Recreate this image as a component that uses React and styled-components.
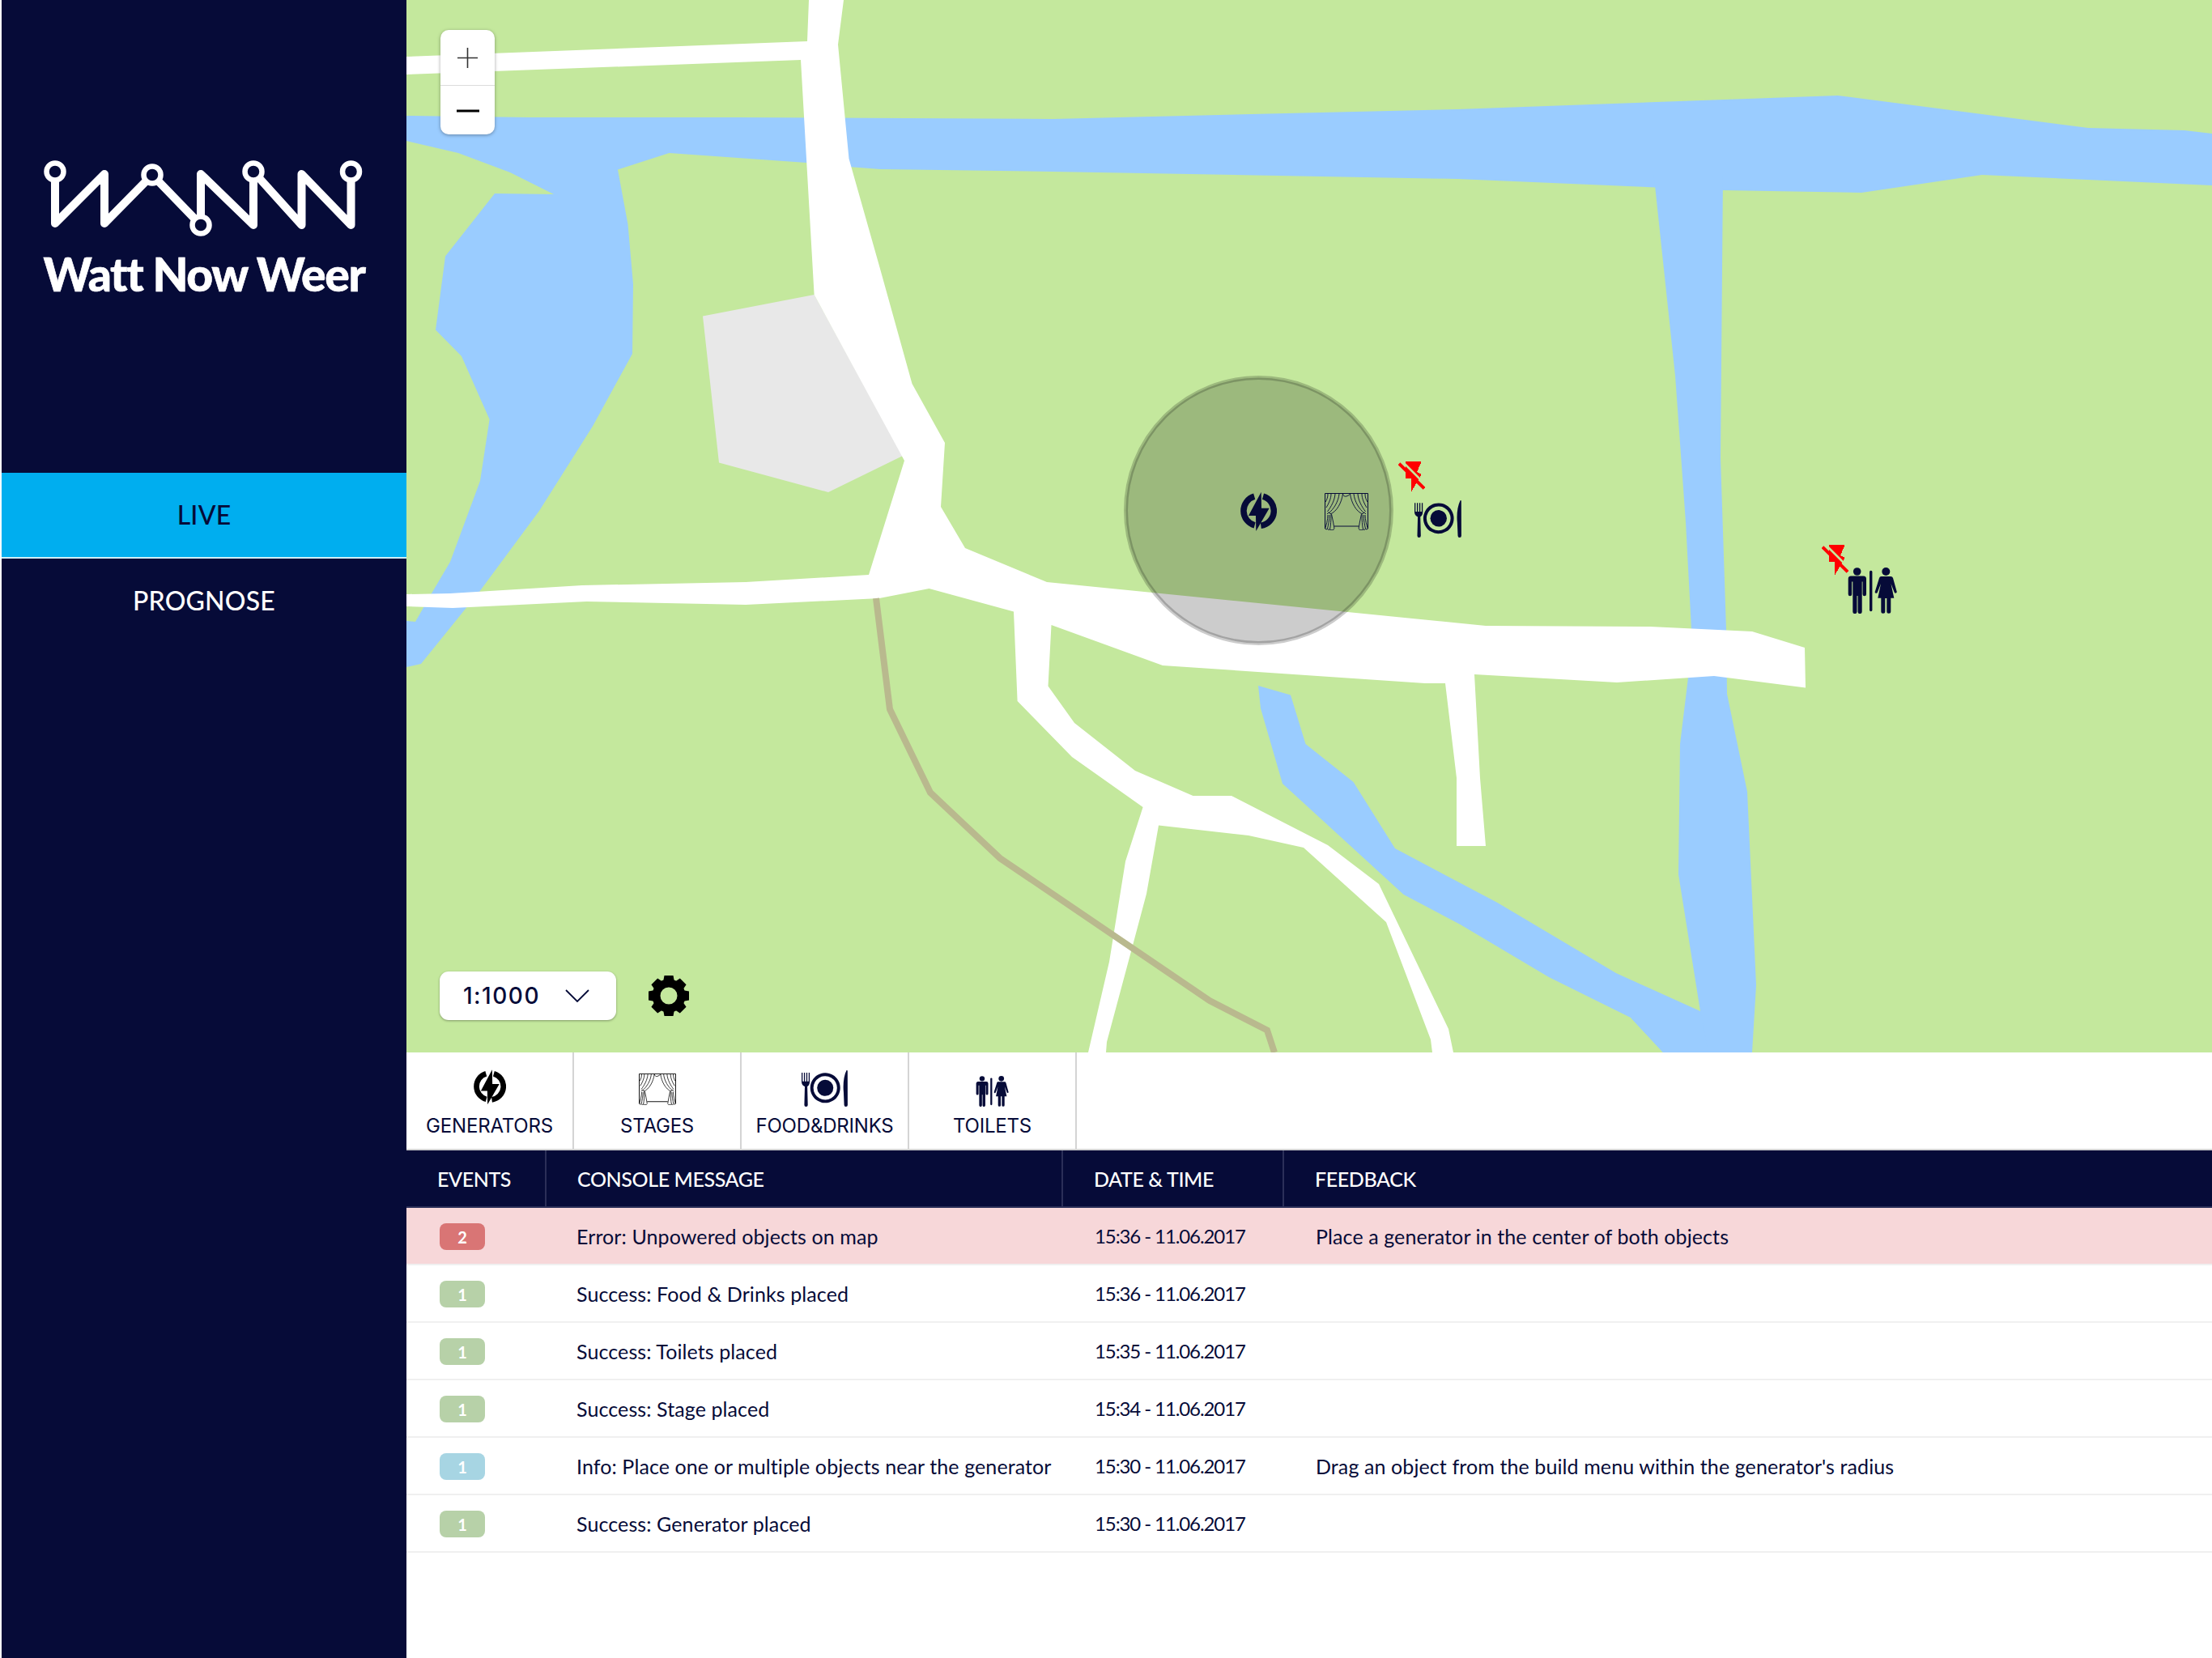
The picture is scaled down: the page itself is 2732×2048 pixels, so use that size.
import React from "react";
import styled, { createGlobalStyle } from "styled-components";

const NAVY = "#060b38";
const GREEN = "#c4e89d";
const BLUE = "#9accff";

const GlobalStyle = createGlobalStyle`
  html, body {
    margin: 0;
    padding: 0;
    background: #fff;
    font-family: "Lato", "Liberation Sans", sans-serif;
  }
`;

const Page = styled.div`
  display: flex;
  width: 2732px;
  height: 2048px;
  padding-left: 2px;
  box-sizing: border-box;
  overflow: hidden;
`;

const Sidebar = styled.aside`
  flex: 0 0 500px;
  background: ${NAVY};
  display: flex;
  flex-direction: column;
`;

const LogoBlock = styled.div`
  height: 584px;
  padding-top: 196px;
  box-sizing: border-box;
  display: flex;
  flex-direction: column;
  align-items: center;
`;

const LogoMark = styled.svg`
  display: block;
  width: 398px;
  height: 96px;
  margin-left: -2px;
`;

const LogoText = styled.div`
  margin-top: 9px;
  color: #fff;
  font-family: "Lato", sans-serif;
  font-weight: 900;
  font-size: 57px;
  letter-spacing: -1.4px;
  line-height: 74px;
  white-space: nowrap;
  -webkit-text-stroke: 0.6px #fff;
`;

const NavItem = styled.div`
  height: 106px;
  padding-bottom: 2px;
  box-sizing: border-box;
  display: flex;
  align-items: center;
  justify-content: center;
  font-size: 32px;
  font-weight: 500;
  letter-spacing: 0.2px;
  color: ${(p) => (p.$active ? NAVY : "#fff")};
  background: ${(p) => (p.$active ? "#00aeef" : "transparent")};
  border-bottom: 2px solid ${(p) => (p.$active ? "#cfeefb" : "transparent")};
`;

const Main = styled.main`
  flex: 1;
  min-width: 0;
  display: flex;
  flex-direction: column;
`;

const MapArea = styled.section`
  position: relative;
  height: 1300px;
  background: ${GREEN};
  overflow: hidden;
`;

const MapDrawing = styled.svg`
  display: block;
  width: 2230px;
  height: 1300px;
`;

const Pin = styled.div`
  position: absolute;
  left: ${(p) => p.$x - 502}px;
  top: ${(p) => p.$y}px;
  width: ${(p) => p.$w}px;
  height: ${(p) => p.$h}px;
  color: ${NAVY};
  svg {
    display: block;
    width: 100%;
    height: 100%;
  }
`;

const ZoomControl = styled.div`
  position: absolute;
  left: 42px;
  top: 37px;
  width: 67px;
  height: 129px;
  background: #fff;
  border-radius: 10px;
  box-shadow: 0 1px 4px rgba(0, 0, 0, 0.35);
  display: flex;
  flex-direction: column;
`;

const ZoomButton = styled.div`
  flex: 0 0 ${(p) => p.$h}px;
  display: flex;
  align-items: center;
  justify-content: center;
  & + & {
    border-top: 1px solid #dcdcdc;
  }
`;

const ScaleRow = styled.div`
  position: absolute;
  left: 41px;
  top: 1200px;
  display: flex;
  align-items: center;
  gap: 40px;
`;

const ScaleSelect = styled.div`
  width: 218px;
  height: 60px;
  box-sizing: border-box;
  padding: 0 33px 0 29px;
  background: #fff;
  border-radius: 11px;
  box-shadow: 0 1px 3px rgba(0, 0, 0, 0.35);
  display: flex;
  align-items: center;
  justify-content: space-between;
  color: ${NAVY};
  font-family: "Inter", sans-serif;
  font-weight: 500;
  font-size: 28px;
  letter-spacing: 1.5px;
`;

const Tabs = styled.nav`
  display: flex;
  height: 119px;
  border-bottom: 2px solid #d4d4d4;
`;

const Tab = styled.div`
  width: 205px;
  border-right: 2px solid #d4d4d4;
  display: flex;
  flex-direction: column;
  align-items: center;
  color: ${NAVY};
  font-family: "Inter", sans-serif;
  font-size: 24px;
  letter-spacing: -0.2px;
`;

const TabIcon = styled.div`
  height: 68px;
  display: flex;
  align-items: flex-end;
  color: ${(p) => (p.$black ? "#000" : NAVY)};
  svg {
    display: block;
    width: ${(p) => p.$w}px;
    height: ${(p) => p.$h}px;
    margin-bottom: ${(p) => p.$mb}px;
  }
`;

const TabLabel = styled.div`
  margin-top: 11px;
  line-height: 24px;
`;

const HeaderRow = styled.div`
  display: grid;
  grid-template-columns: 171px 638px 273px 1fr;
  height: 69px;
  background: ${NAVY};
  border-bottom: 2px solid #2b2f58;
`;

const HeaderCell = styled.div`
  display: flex;
  align-items: center;
  padding-left: 38px;
  color: #fff;
  font-size: 25px;
  font-weight: 500;
  letter-spacing: -0.4px;
  & + & {
    border-left: 2px solid #2b2f58;
  }
`;

const Row = styled.div`
  display: grid;
  grid-template-columns: 171px 638px 273px 1fr;
  height: 69px;
  background: ${(p) => (p.$error ? "#f7d7d9" : "#fff")};
  border-bottom: 2px solid #f0f0f0;
`;

const Cell = styled.div`
  display: flex;
  align-items: center;
  padding-left: ${(p) => p.$pad ?? 39}px;
  color: ${NAVY};
  font-size: 25px;
  letter-spacing: 0.1px;
  white-space: nowrap;
`;

const TimeCell = styled(Cell)`
  font-size: 24px;
  letter-spacing: -1.1px;
`;

const Badge = styled.span`
  width: 56px;
  height: 33px;
  margin-top: 2px;
  border-radius: 8px;
  display: flex;
  align-items: center;
  justify-content: center;
  background: ${(p) => p.$bg};
  color: #fff;
  font-size: 20px;
  font-weight: 700;
`;

const GeneratorIcon = () => (
  <svg viewBox="0 0 45 49" fill="none">
    <path d="M17.200 6.200A18.500 18.500 0 0 0 17.600 41.800" stroke="currentColor" strokeWidth="7.500" />
    <path d="M28 6.200A18.500 18.500 0 0 1 25.300 42.300" stroke="currentColor" strokeWidth="7.500" />
    <path d="M25.700 0.700L10 30h9l0.300 19L35.700 20.700H26z" fill="currentColor" stroke="none" />
  </svg>
);

const StageIcon = () => (
  <svg viewBox="0 0 54 46" fill="none" stroke="currentColor" strokeWidth="0.9">
    <path d="M0.500 0.500H53.500M0.500 0.500V44M53.500 0.500V44M12 41H42" strokeWidth="1.100" />
    <path d="M22.500 1q1 4 4.500 3t4.500-3" />
    {[0, 1].map((side) => (
      <g key={side} transform={side ? "matrix(-1 0 0 1 54 0)" : undefined}>
        <path d="M22.500 1C21 12 15 23 7 26" />
        <path d="M18 1C17 11 11 20 5 25" />
        <path d="M13 1C12.500 9 8 17 3.500 23" />
        <path d="M8 1C8 7 5 13 2 18" />
        <path d="M4 1C4 5 3 8 1 11" />
        <path d="M3 26L5 24L8 26" />
        <path d="M4 27C4 33 2 40 0.500 44q1.500 1.500 3 0.500q1.500 1.500 3 0.500q1.500 1.500 3 0.500q1.500 0 2.500-1" />
        <path d="M6 27C6 33 4.500 40 3.500 44M8 27C8 33 7.500 40 6.500 45M8.500 26C10 32 11 38 12 44" />
      </g>
    ))}
  </svg>
);

const FoodIcon = () => (
  <svg viewBox="0 0 58.500 47" fill="currentColor">
    <path d="M0 3h1.300v11h1.700V3h1.300v11H6V3h1.300v11H9V3h1.300v11c0 4-1.500 5.500-3 6.500L7.900 44a2.200 2.200 0 0 1-4.400 0L4.100 20.500C2 19.500 0 18 0 14z" />
    <path fillRule="evenodd" d="M30 3.300a19 19 0 1 0 0.010 0zM30 7.300a15 15 0 1 1-0.010 0z" />
    <circle cx="30" cy="22.300" r="10.300" />
    <path d="M57 0C53.500 7 52.300 18 53.300 27.500L54 44a2.200 2.200 0 0 0 4.400 0L58.300 1C58.300 0 57.500-0.500 57 0z" />
  </svg>
);

const ToiletIcon = () => (
  <svg viewBox="0 0 61 57" fill="currentColor">
    <circle cx="11.700" cy="5" r="4.800" />
    <path d="M4 10.500h15.500a3.500 3.500 0 0 1 3.500 3.500v19a2.200 2.200 0 0 1-4.500 0V17.500h-0.800V54.500a2.600 2.600 0 0 1-5.200 0V35h-1v19.500a2.600 2.600 0 0 1-5.200 0V17.500H5.200V33a2.200 2.200 0 0 1-4.500 0V14a3.500 3.500 0 0 1 3.300-3.500z" />
    <rect x="27" y="3.700" width="3.400" height="50.500" rx="1.700" />
    <circle cx="47.300" cy="5" r="5" />
    <path d="M41.500 11h11.500c1.500 0 2.500 0.700 3 2l4.600 16.500a1.500 1.500 0 0 1-3 1L53.500 20l3.800 17.700H53.300v16.500a2.500 2.500 0 0 1-5 0V38h-2v16.200a2.500 2.500 0 0 1-5 0V37.700H37.300L41 20l-4.200 10.700a1.500 1.500 0 0 1-3-1L39 13c0.500-1.300 1.300-2 2.500-2z" />
  </svg>
);

const NoPowerIcon = () => (
  <svg viewBox="0 0 33 39" shapeRendering="crispEdges">
    <path d="M9.300 0H28.700L23 13l5.700 3L15.500 38.500 16 21H9.300z" fill="#ff0000" />
    <path d="M7 2L31 26" stroke={GREEN} strokeWidth="2.500" shapeRendering="auto" />
    <path d="M1 2.700L32 33.300" stroke="#ff0000" strokeWidth="3.800" shapeRendering="auto" />
  </svg>
);

const gearTeeth = [0, 45, 90, 135, 180, 225, 270, 315];

const GearIcon = () => (
  <svg width="50" height="50" viewBox="0 0 50 50">
    {gearTeeth.map((angle) => (
      <path key={angle} d="M19.500 0H30.500L32 8H18z" fill="#000" transform={`rotate(${angle} 25 25)`} />
    ))}
    <circle cx="25" cy="25" r="15.500" fill="none" stroke="#000" strokeWidth="10" />
  </svg>
);

const water = [
  "502,143 653,145 908,145 1300,147 1800,135 2270,118 2579,158 2698,161 2732,165 2732,229 2448,216 2299,238 2128,235 1800,221 1300,212 1087,209 1048,206 996,201 826.500,189 763,209.500 775.500,277 782,351 781,437 732,526.500 666,631 592,731 576.500,750 520,820 502,824 502,767 513,768 533,733 556,694 593,594 604.600,518 570,440 538,407.500 550,316.500 611,239 684,240 630,213 566,189 502,174",
  "2042.500,215 2128,215 2125,566 2132,778 2133,857 2158,978 2169,1217 2164,1300 2054,1300 2014,1257 2073,1300 2100,1249 2073,1080 2075,919 2085,837 2089,777 2082,645 2069,464",
  "1554,847 1594,858.500 1612.500,919 1671.600,966 1723,1048 1849.500,1115 1996,1202 2100,1249 2110,1300 2054,1300 2014,1257 1913,1207 1803.600,1142 1733.600,1105 1584,968 1557,875",
];

const roads = [
  "502,70 997,51 999,0 1042,0 1035,55 1048.500,196 1087,332 1126.500,474 1167,547 1162,626 1192,677 1293,719 1835,773 2038,774 2164,780 2229,800 2230,849.500 2117,835 1997,843 1821,833 1828,961 1835,1045 1799,1045 1799,961 1785,844 1760,844 1436,822 1298.500,772 1294.500,847.500 1327,893 1402,952 1473.500,983 1521,983 1640,1044 1703,1092 1789,1271 1795,1300 1769,1300 1767,1284 1712,1139 1610,1047 1542,1032 1431,1019.500 1416,1104 1396,1179 1367,1287 1366,1300 1344,1300 1370,1188 1390,1064 1411.600,997 1324,935 1256.600,866 1252,755.500 1147.500,727 1086,739 921,747 724.500,743 559,751 502,749 502,734 556,733 719,723 921,719 1073,710 1117,569 1005.600,364 989,74 502,92",
];

const plaza = "868,390.500 1005.600,364 1115,563 1023,608 888,571.500";
const footpath = "1082,739 1099,876 1149,979 1235,1060 1494,1236 1565,1272.500 1574,1300";

const logoLine = "M68 212V276L129 215V276L188 216L248 278V215L313 278V212L372.500 278V215L433.500 278V212";

const logoNodes = [
  [68, 212],
  [188, 216],
  [248, 278],
  [313, 212],
  [433.5, 212],
];

const events = [
  { count: 2, bg: "#d97575", message: "Error: Unpowered objects on map", time: "15:36 - 11.06.2017", feedback: "Place a generator in the center of both objects", error: true },
  { count: 1, bg: "#b7d1a8", message: "Success: Food & Drinks placed", time: "15:36 - 11.06.2017" },
  { count: 1, bg: "#b7d1a8", message: "Success: Toilets placed", time: "15:35 - 11.06.2017" },
  { count: 1, bg: "#b7d1a8", message: "Success: Stage placed", time: "15:34 - 11.06.2017" },
  { count: 1, bg: "#a7d5e3", message: "Info: Place one or multiple objects near the generator", time: "15:30 - 11.06.2017", feedback: "Drag an object from the build menu within the generator's radius" },
  { count: 1, bg: "#b7d1a8", message: "Success: Generator placed", time: "15:30 - 11.06.2017" },
];

const App = () => (
  <>
    <GlobalStyle />
    <Page>
      <Sidebar>
        <LogoBlock>
          <LogoMark viewBox="52 196 398 96" fill="none">
            <path d={logoLine} stroke="#fff" strokeWidth="10" strokeLinejoin="round" strokeLinecap="round" />
            {logoNodes.map(([cx, cy]) => (
              <circle key={cx} cx={cx} cy={cy} r="10.500" fill={NAVY} stroke="#fff" strokeWidth="6.500" />
            ))}
          </LogoMark>
          <LogoText>Watt Now Weer</LogoText>
        </LogoBlock>
        <NavItem $active>LIVE</NavItem>
        <NavItem>PROGNOSE</NavItem>
      </Sidebar>
      <Main>
        <MapArea>
          <MapDrawing viewBox="502 0 2230 1300">
            {water.map((points) => (
              <polygon key={points} points={points} fill={BLUE} />
            ))}
            <polygon points={plaza} fill="#e8e8e8" />
            {roads.map((points) => (
              <polygon key={points} points={points} fill="#fff" />
            ))}
            <polyline points={footpath} fill="none" stroke="#b9b98e" strokeWidth="8" />
            <circle cx="1554.500" cy="630.500" r="164" fill="rgba(0,0,0,0.2)" stroke="rgba(0,0,0,0.2)" strokeWidth="5" />
          </MapDrawing>
          <Pin $x={1532} $y={607} $w={45} $h={49}><GeneratorIcon /></Pin>
          <Pin $x={1636} $y={609} $w={54} $h={46}><StageIcon /></Pin>
          <Pin $x={1747} $y={618} $w={58} $h={47}><FoodIcon /></Pin>
          <Pin $x={1727} $y={570} $w={33} $h={39}><NoPowerIcon /></Pin>
          <Pin $x={2282} $y={701} $w={61} $h={57}><ToiletIcon /></Pin>
          <Pin $x={2250} $y={673} $w={33} $h={39}><NoPowerIcon /></Pin>
          <ZoomControl>
            <ZoomButton $h={68}>
              <svg width="25" height="25" viewBox="0 0 25 25">
                <path d="M12.500 0V25M0 12.500H25" stroke="#333" strokeWidth="1.600" />
              </svg>
            </ZoomButton>
            <ZoomButton $h={61}>
              <svg width="28" height="4" viewBox="0 0 28 4">
                <path d="M0 2H28" stroke="#000" strokeWidth="3" />
              </svg>
            </ZoomButton>
          </ZoomControl>
          <ScaleRow>
            <ScaleSelect>
              1:1000
              <svg width="30" height="16" viewBox="0 0 30 16" fill="none">
                <path d="M1 1L15 15L29 1" stroke={NAVY} strokeWidth="1.800" />
              </svg>
            </ScaleSelect>
            <GearIcon />
          </ScaleRow>
        </MapArea>
        <Tabs>
          <Tab>
            <TabIcon $black $w={40} $h={45} $mb={3}><GeneratorIcon /></TabIcon>
            <TabLabel>GENERATORS</TabLabel>
          </Tab>
          <Tab>
            <TabIcon $black $w={46} $h={39} $mb={3}><StageIcon /></TabIcon>
            <TabLabel>STAGES</TabLabel>
          </Tab>
          <Tab>
            <TabIcon $w={57} $h={46} $mb={0}><FoodIcon /></TabIcon>
            <TabLabel>FOOD&amp;DRINKS</TabLabel>
          </Tab>
          <Tab>
            <TabIcon $w={41} $h={38} $mb={1}><ToiletIcon /></TabIcon>
            <TabLabel>TOILETS</TabLabel>
          </Tab>
        </Tabs>
        <HeaderRow>
          <HeaderCell>EVENTS</HeaderCell>
          <HeaderCell>CONSOLE MESSAGE</HeaderCell>
          <HeaderCell>DATE &amp; TIME</HeaderCell>
          <HeaderCell>FEEDBACK</HeaderCell>
        </HeaderRow>
        {events.map((event) => (
          <Row key={event.message} $error={event.error}>
            <Cell $pad={41}><Badge $bg={event.bg}>{event.count}</Badge></Cell>
            <Cell>{event.message}</Cell>
            <TimeCell $pad={41}>{event.time}</TimeCell>
            <Cell $pad={41}>{event.feedback}</Cell>
          </Row>
        ))}
      </Main>
    </Page>
  </>
);

export default App;
